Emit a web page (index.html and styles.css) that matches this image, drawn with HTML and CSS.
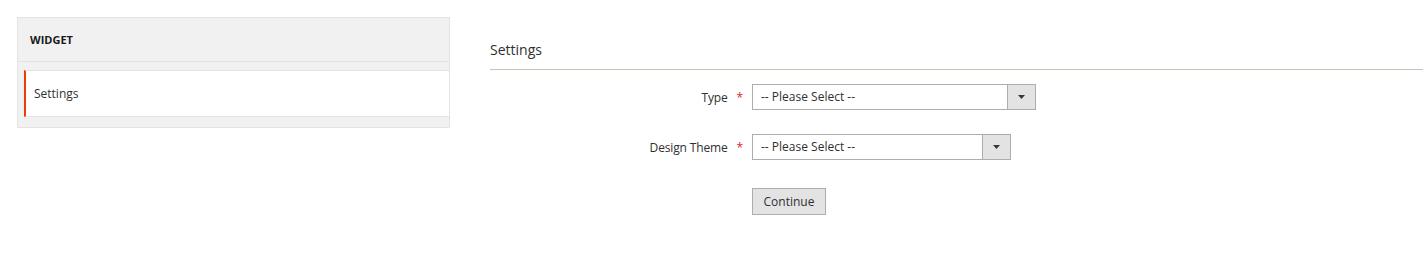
FILE: index.html
```
<!doctype html>
<html>

<head>
    <meta charset="utf-8">
    <title>Widget</title>
    <link rel="stylesheet" href="styles.css">
</head>

<body>
    <div class="page">
        <div class="side-nav">
            <div class="side-nav-title">WIDGET</div>
            <div class="side-nav-items">
                <div class="side-nav-item active">Settings</div>
            </div>
        </div>
        <div class="main">
            <div class="legend">Settings</div>
            <div class="form">
                <div class="form-row">
                    <label class="form-label">Type<span class="required">*</span></label>
                    <div class="select select-type">
                        <span class="select-value">-- Please Select --</span>
                        <span class="select-btn">
                            <svg width="7" height="4" viewBox="0 0 7 4"><polygon points="0,0 7,0 3.5,4" fill="#41362f" /></svg>
                        </span>
                    </div>
                </div>
                <div class="form-row">
                    <label class="form-label">Design Theme<span class="required">*</span></label>
                    <div class="select select-theme">
                        <span class="select-value">-- Please Select --</span>
                        <span class="select-btn">
                            <svg width="7" height="4" viewBox="0 0 7 4"><polygon points="0,0 7,0 3.5,4" fill="#41362f" /></svg>
                        </span>
                    </div>
                </div>
                <div class="form-row form-actions">
                    <span class="form-label"></span>
                    <button class="btn" type="button">Continue</button>
                </div>
            </div>
        </div>
    </div>
</body>

</html>
```
FILE: styles.css
```
body {
    margin: 0;
    font-family: "Open Sans", "Liberation Sans", sans-serif;
    color: #303030;
    background: #fff;
}
.page {
    display: flex;
    padding-top: 17px;
    padding-left: 17px;
}
.side-nav {
    width: 433px;
    flex-shrink: 0;
    align-self: flex-start;
    box-sizing: border-box;
    border: 1px solid #e3e3e3;
    background-color: #f1f1f1;
}
.side-nav-title {
    height: 43px;
    line-height: 43px;
    padding-left: 12px;
    font-size: 11px;
    font-weight: bold;
    color: #1a1a1a;
    border-bottom: 1px solid #e3e3e3;
}
.side-nav-items {
    padding: 8px 0 10px 6px;
}
.side-nav-item {
    height: 45px;
    line-height: 45px;
    padding-left: 8px;
    font-size: 12px;
    background-color: #fff;
    border-top: 1px solid #e3e3e3;
    border-bottom: 1px solid #e3e3e3;
}
.side-nav-item.active {
    border-left: 2px solid #eb3e0a;
}
.main {
    flex: 1;
    margin-left: 40px;
}
.legend {
    margin-top: 23px;
    line-height: 19px;
    padding-bottom: 10px;
    font-size: 14px;
    border-bottom: 1px solid #cac3b4;
}
.form {
    padding-top: 14px;
}
.form-row {
    display: flex;
    align-items: center;
    margin-bottom: 24px;
}
.form-actions {
    margin-top: 28px;
}
.form-label {
    width: 253px;
    flex-shrink: 0;
    margin-right: 9px;
    text-align: right;
    font-size: 12px;
    letter-spacing: -0.15px;
}
.required {
    margin-left: 9px;
    color: #e22626;
}
.select {
    display: flex;
    height: 26px;
    box-sizing: border-box;
    border: 1px solid #adadad;
    background-color: #fff;
    font-size: 12px;
}
.select-type {
    width: 284px;
}
.select-theme {
    width: 259px;
}
.select-value {
    flex: 1;
    line-height: 24px;
    padding-left: 8px;
}
.select-btn {
    width: 27px;
    display: flex;
    align-items: center;
    justify-content: center;
    border-left: 1px solid #adadad;
    background-color: #e3e3e3;
}
.btn {
    width: 74px;
    height: 27px;
    padding: 0;
    border: 1px solid #adadad;
    background-color: #e3e3e3;
    font-family: "Open Sans", "Liberation Sans", sans-serif;
    font-size: 12px;
    color: #303030;
}
```
